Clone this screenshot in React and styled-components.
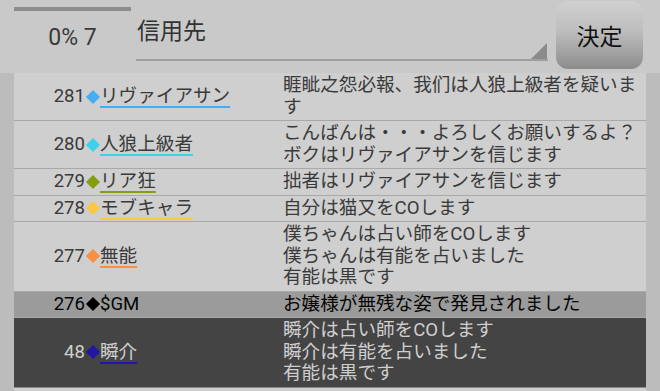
import React from "react";
import styled, { createGlobalStyle } from "styled-components";

const GlobalStyle = createGlobalStyle`
  html, body { margin: 0; padding: 0; height: 100%; overflow: hidden; }
  body {
    background: #bcbcbc;
    font-family: Roboto, "Noto Sans CJK JP", "Noto Sans", sans-serif;
  }
  #root { height: 100%; }
`;

const Page = styled.div`
  height: 100vh;
  display: flex;
  flex-direction: column;
`;

const Header = styled.header`
  height: 73px;
  flex: none;
  background: #c9c9c9;
  display: flex;
  align-items: flex-start;
  padding-left: 14px;
  box-sizing: border-box;
`;

const Progress = styled.div`
  width: 117px;
  display: flex;
  flex-direction: column;
  align-items: center;
  padding-top: 7px;
`;

const Bar = styled.div`
  align-self: stretch;
  height: 4px;
  background: #8c8c8c;
`;

const ProgressText = styled.div`
  margin-top: 13px;
  font-size: 23px;
  line-height: 28px;
  color: #3a3a3a;
`;

const Spinner = styled.div`
  position: relative;
  margin-left: 5px;
  width: 412px;
  height: 61px;
  box-sizing: border-box;
  padding: 20px 0 0 1px;
  border-bottom: 2px solid #9e9e9e;
  font-size: 23px;
  line-height: 23px;
  color: #333;
  &::after {
    content: "";
    position: absolute;
    right: 1px;
    bottom: 0;
    width: 0;
    height: 0;
    border-left: 16px solid transparent;
    border-bottom: 16px solid #8a8a8a;
  }
`;

const Button = styled.button`
  margin: 1px 0 0 8px;
  width: 87px;
  height: 68px;
  border: none;
  border-radius: 12px;
  background: linear-gradient(#d0d0d0 0%, #bdbdbd 45%, #8c8c8c 100%);
  font-family: inherit;
  font-size: 23px;
  color: #111;
  padding: 0;
  display: flex;
  align-items: center;
  justify-content: center;
`;

const List = styled.div`
  flex: 1;
  margin: 0 14px;
  background: #cfcfcf;
  overflow: hidden;
`;

const Row = styled.div`
  display: grid;
  grid-template-columns: 269px 363px;
  padding: 2px 0 2px;
  border-bottom: 1px solid ${(p) => (p.$kind === "dark" ? "#8a8a8a" : "#a9a9a9")};
  background: ${(p) =>
    p.$kind === "gm" ? "#9b9b9b" : p.$kind === "dark" ? "#444444" : "#cfcfcf"};
  color: ${(p) =>
    p.$kind === "gm" ? "#050505" : p.$kind === "dark" ? "#cfcfcf" : "#3a3a3a"};
  font-size: 18.6px;
  line-height: 21.5px;
`;

const Who = styled.div`
  display: flex;
  align-items: center;
`;

const Num = styled.span`
  width: 71px;
  text-align: right;
`;

const DiamondCell = styled.span`
  width: 15px;
  display: flex;
  align-items: center;
  justify-content: center;
`;

const Diamond = styled.span`
  width: 10px;
  height: 10px;
  transform: rotate(45deg);
  background: ${(p) => p.$color};
`;

const Name = styled.span`
  text-decoration: ${(p) => (p.$line ? "underline" : "none")};
  text-decoration-color: ${(p) => p.$line || "transparent"};
  text-decoration-thickness: 2px;
  text-underline-offset: 4px;
`;

const Message = styled.div`
  word-break: break-all;
`;

const rows = [
  {
    no: 281,
    name: "リヴァイアサン",
    color: "#45aef2",
    lines: ["睚眦之怨必報、我们は人狼上級者を疑います"],
  },
  {
    no: 280,
    name: "人狼上級者",
    color: "#3fd0ea",
    lines: ["こんばんは・・・よろしくお願いするよ？", "ボクはリヴァイアサンを信じます"],
  },
  {
    no: 279,
    name: "リア狂",
    color: "#849e10",
    lines: ["拙者はリヴァイアサンを信じます"],
  },
  {
    no: 278,
    name: "モブキャラ",
    color: "#fbc844",
    lines: ["自分は猫又をCOします"],
  },
  {
    no: 277,
    name: "無能",
    color: "#f98f40",
    lines: ["僕ちゃんは占い師をCOします", "僕ちゃんは有能を占いました", "有能は黒です"],
  },
  {
    no: 276,
    name: "$GM",
    color: "#000",
    kind: "gm",
    plain: true,
    lines: ["お嬢様が無残な姿で発見されました"],
  },
  {
    no: 48,
    name: "瞬介",
    color: "#2414a4",
    kind: "dark",
    lines: ["瞬介は占い師をCOします", "瞬介は有能を占いました", "有能は黒です"],
  },
];

export default function App() {
  return (
    <>
      <GlobalStyle />
      <Page>
        <Header>
          <Progress>
            <Bar />
            <ProgressText>0% 7</ProgressText>
          </Progress>
          <Spinner>信用先</Spinner>
          <Button>決定</Button>
        </Header>
        <List>
          {rows.map((r) => (
            <Row key={r.no} $kind={r.kind}>
              <Who>
                <Num>{r.no}</Num>
                <DiamondCell>
                  <Diamond $color={r.color} />
                </DiamondCell>
                <Name $line={r.plain ? null : r.color}>{r.name}</Name>
              </Who>
              <Message>
                {r.lines.map((l, i) => (
                  <div key={i}>{l}</div>
                ))}
              </Message>
            </Row>
          ))}
        </List>
      </Page>
    </>
  );
}
